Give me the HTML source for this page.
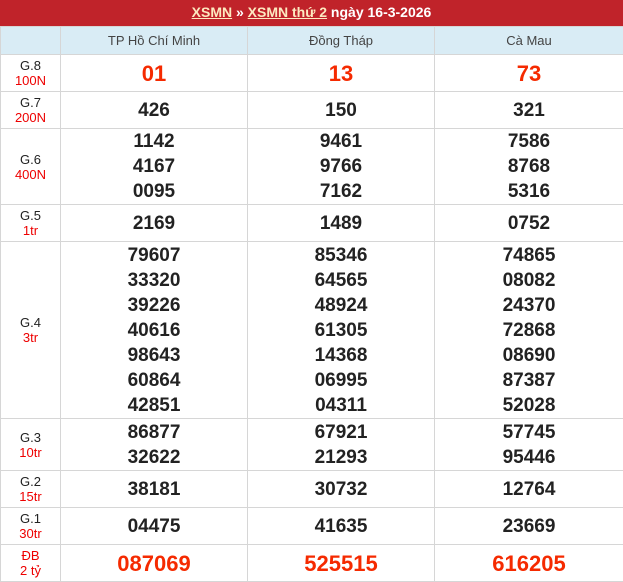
<!DOCTYPE html>
<html><head><meta charset="utf-8"><style>
body{margin:0;width:623px;height:575px;overflow:hidden;background:#fff;font-family:"Liberation Sans",Arial,sans-serif}
.t{height:26px;background:#c0232a;color:#fff;font-weight:bold;font-size:14px;text-align:center;line-height:25px}
.t u{color:#fde9c0}
table{border-collapse:collapse;width:623px;table-layout:fixed;position:absolute;top:26px;left:0}
td{border:1px solid #d6d6d6;text-align:center;padding:0;color:#222;font-weight:bold;font-size:19px;line-height:25px;overflow:hidden}
tr.h td{background:#d9ecf5;height:27px;font-weight:normal;font-size:13px;color:#444;line-height:27px}
td.p{font-weight:normal;font-size:13px;line-height:15px;color:#222}
td.p span{color:#e00}
.r{color:#f52a00;font-size:22px}
</style></head><body>
<div class="t"><u>XSMN</u> » <u>XSMN thứ 2</u> ngày 16-3-2026</div>
<table>
<col style="width:60px"><col style="width:187px"><col style="width:187px"><col style="width:189px">
<tr class="h"><td></td><td>TP Hồ Chí Minh</td><td>Đồng Tháp</td><td>Cà Mau</td></tr>
<tr style="height:37px"><td class="p">G.8<br><span>100N</span></td><td class="r">01</td><td class="r">13</td><td class="r">73</td></tr>
<tr style="height:37px"><td class="p">G.7<br><span>200N</span></td><td>426</td><td>150</td><td>321</td></tr>
<tr style="height:76px"><td class="p">G.6<br><span>400N</span></td><td>1142<br>4167<br>0095</td><td>9461<br>9766<br>7162</td><td>7586<br>8768<br>5316</td></tr>
<tr style="height:37px"><td class="p">G.5<br><span>1tr</span></td><td>2169</td><td>1489</td><td>0752</td></tr>
<tr style="height:177px"><td class="p">G.4<br><span>3tr</span></td><td>79607<br>33320<br>39226<br>40616<br>98643<br>60864<br>42851</td><td>85346<br>64565<br>48924<br>61305<br>14368<br>06995<br>04311</td><td>74865<br>08082<br>24370<br>72868<br>08690<br>87387<br>52028</td></tr>
<tr style="height:52px"><td class="p">G.3<br><span>10tr</span></td><td>86877<br>32622</td><td>67921<br>21293</td><td>57745<br>95446</td></tr>
<tr style="height:37px"><td class="p">G.2<br><span>15tr</span></td><td>38181</td><td>30732</td><td>12764</td></tr>
<tr style="height:37px"><td class="p">G.1<br><span>30tr</span></td><td>04475</td><td>41635</td><td>23669</td></tr>
<tr style="height:37px"><td class="p"><span>ĐB<br>2 tỷ</span></td><td class="r">087069</td><td class="r">525515</td><td class="r">616205</td></tr>
</table>
</body></html>
